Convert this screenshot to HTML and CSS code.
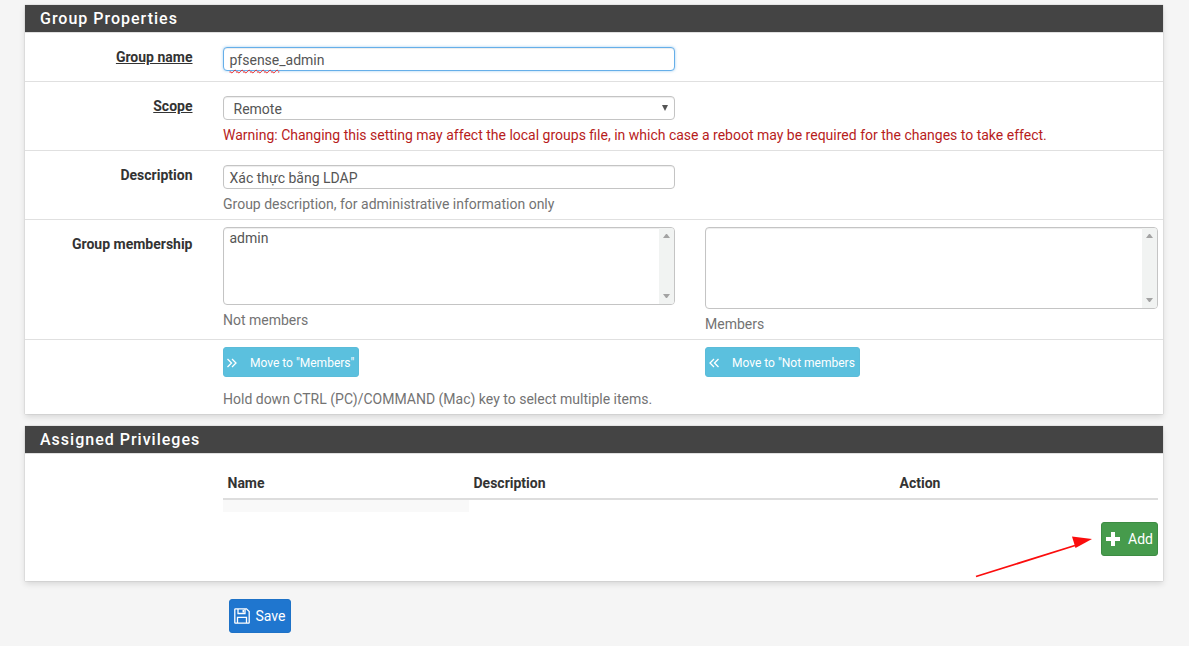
FILE: index.html
```html
<!DOCTYPE html>
<html lang="en">
<head>
<meta charset="utf-8">
<title>Group Properties</title>
<link rel="stylesheet" href="styles.css">
</head>
<body>
<main class="page">
  <section class="panel">
    <h2 class="panel-title">Group Properties</h2>
    <div class="row row-first">
      <div class="label"><span class="req">Group name</span></div>
      <div class="content">
        <div class="field field-focus"><span class="misspelt">pfsense</span>_admin</div>
      </div>
    </div>
    <div class="row">
      <div class="label"><span class="req">Scope</span></div>
      <div class="content">
        <div class="field select-field">Remote<span class="caret"></span></div>
        <p class="warning">Warning: Changing this setting may affect the local groups file, in which case a reboot may be required for the changes to take effect.</p>
      </div>
    </div>
    <div class="row">
      <div class="label">Description</div>
      <div class="content">
        <div class="field">Xác thực bằng LDAP</div>
        <p class="help">Group description, for administrative information only</p>
      </div>
    </div>
    <div class="row row-tight">
      <div class="label">Group membership</div>
      <div class="pair">
        <div>
          <div class="listbox">
            <div class="list-items">admin</div>
            <div class="scrollbar"><span class="arrow-up"></span><span class="arrow-down"></span></div>
          </div>
          <p class="help help-list">Not members</p>
        </div>
        <div>
          <div class="listbox listbox-tall">
            <div class="list-items"></div>
            <div class="scrollbar"><span class="arrow-up"></span><span class="arrow-down"></span></div>
          </div>
          <p class="help help-list">Members</p>
        </div>
      </div>
    </div>
    <div class="row row-tight row-last">
      <div class="label"></div>
      <div class="content-buttons">
        <div class="pair">
          <div>
            <button class="btn btn-info" type="button">
              <svg class="icon-move" viewBox="0 0 12 12"><path d="M1.5 2 5.5 6 1.5 10M6 2l4 4-4 4" fill="none" stroke="currentColor" stroke-width="1.3"/></svg>
              <span class="btn-text">Move to "Members"</span>
            </button>
          </div>
          <div>
            <button class="btn btn-info" type="button">
              <svg class="icon-move" viewBox="0 0 12 12"><path d="M6 2 2 6l4 4M10.500 2l-4 4 4 4" fill="none" stroke="currentColor" stroke-width="1.3"/></svg>
              <span class="btn-text">Move to "Not members</span>
            </button>
          </div>
        </div>
        <p class="help help-hold">Hold down CTRL (PC)/COMMAND (Mac) key to select multiple items.</p>
      </div>
    </div>
  </section>

  <section class="panel panel-second">
    <h2 class="panel-title">Assigned Privileges</h2>
    <div class="priv-body">
      <div class="table">
        <div class="thead">
          <div class="th th-name">Name</div>
          <div class="th th-desc">Description</div>
          <div class="th">Action</div>
        </div>
        <div class="stripe"></div>
      </div>
      <div class="add-line">
        <button class="btn btn-add" type="button">
          <svg class="icon-plus" viewBox="0 0 14 14"><path d="M5 0h4v5h5v4H9v5H5V9H0V5h5z" fill="currentColor"/></svg>
          <span>Add</span>
        </button>
      </div>
    </div>
  </section>

  <div class="save-line">
    <button class="btn btn-save" type="button">
      <svg class="icon-save" viewBox="0 0 16 16"><path d="M1.500.8h11l2.700 2.700v11a.7.7 0 0 1-.7.7h-13a.7.7 0 0 1-.7-.7v-13a.7.7 0 0 1 .7-.7z" fill="none" stroke="currentColor" stroke-width="1.300"/><path d="M4 1v4.500h7V1M3.500 15V9.300h9V15" fill="none" stroke="currentColor" stroke-width="1.300"/><path d="M8.500 1.800h1.500v2.700H8.500z" fill="currentColor"/></svg>
      <span>Save</span>
    </button>
  </div>
</main>
<svg class="annotation" viewBox="0 0 120 42" aria-hidden="true"><path d="M1 40.500 100 9.500" stroke="#fb0d0d" stroke-width="1.800" fill="none"/><path d="M117 3 97 0.500l3.500 11.500z" fill="#fb0d0d"/></svg>
</body>
</html>
```

FILE: styles.css
```css
* { box-sizing: border-box; }

html, body { margin: 0; padding: 0; }

body {
  background: #f5f5f5;
  color: #333;
  font: 14px/20px Roboto, "Liberation Sans", sans-serif;
  height: 646px;
  overflow: hidden;
  position: relative;
}

.page { padding: 5px 26px 0 25px; }

.panel {
  background: #fff;
  box-shadow: 0 3px 6px rgba(0, 0, 0, .12), 0 0 1px rgba(0, 0, 0, .3);
}

.panel-second { margin-top: 12px; }

.panel-title {
  background: #444;
  border-bottom: 1px solid #e0e0e0;
  color: #fff;
  font-size: 16px;
  font-weight: 500;
  height: 28px;
  letter-spacing: 1px;
  line-height: 27px;
  margin: 0;
  padding-left: 15px;
}

.row {
  border-bottom: 1px solid #e0e0e0;
  display: grid;
  grid-template-columns: 167.500px 1fr;
  column-gap: 30.500px;
  padding: 14px 5px 5px 0;
}

.row-first { padding-top: 14px; padding-bottom: 10px; }
.row-tight { padding-top: 7px; }
.row-last { border-bottom: 0; padding-bottom: 5px; }

.label {
  font-weight: 700;
  text-align: right;
}

.row-tight .label { padding-top: 7px; }

.req { text-decoration: underline; }

.content { width: 452px; }
.content .warning { width: 900px; }

.field {
  background: #fff;
  border: 1px solid #c4c4c4;
  border-radius: 4px;
  color: #555;
  height: 24px;
  line-height: 24px;
  padding-left: 5.500px;
  box-shadow: inset 0 1px 1px rgba(0, 0, 0, .075);
  position: relative;
}

.field-focus {
  border-color: #66afe9;
  box-shadow: inset 0 1px 1px rgba(0, 0, 0, .075), 0 0 3px rgba(102, 175, 233, .6);
}

.misspelt {
  text-decoration: underline wavy #f02020;
  text-decoration-thickness: 1px;
  text-underline-offset: 4px;
}

.select-field { padding-left: 9.500px; }

.caret {
  border-left: 3px solid transparent;
  border-right: 3px solid transparent;
  border-top: 6px solid #555;
  position: absolute;
  right: 6px;
  top: 8px;
}

.warning {
  color: #b71c1c;
  margin: 5px 0 0;
}

.help {
  color: #737373;
  margin: 5px 0 0;
}

.pair {
  display: grid;
  grid-template-columns: 452px 453px;
  column-gap: 30px;
}

.listbox {
  border: 1px solid #c4c4c4;
  border-radius: 4px;
  color: #555;
  display: flex;
  height: 78px;
  overflow: hidden;
  box-shadow: inset 0 1px 1px rgba(0, 0, 0, .075);
}

.listbox-tall { height: 82px; }

.list-items {
  flex: 1;
  padding: 0 5.500px;
}

.scrollbar {
  background: #f1f3f2;
  display: flex;
  flex-direction: column;
  justify-content: space-between;
  padding: 6px 4px;
  width: 15px;
}

.arrow-up, .arrow-down {
  border-left: 3.500px solid transparent;
  border-right: 3.500px solid transparent;
  height: 0;
  width: 7px;
}

.arrow-up { border-bottom: 4px solid #a3a3a3; }
.arrow-down { border-top: 4px solid #a3a3a3; }

.help-hold { margin-top: 12px; }

.btn {
  align-items: center;
  border: 1px solid transparent;
  border-radius: 3px;
  color: #fff;
  display: inline-flex;
  font-family: inherit;
  padding: 0;
}

.btn-info {
  background: #5bc0de;
  border-color: #5bbcd9;
  font-size: 12px;
  height: 30px;
  padding: 0 4px 0 2px;
}

.btn-text { padding-top: 2px; }

.icon-move { height: 12px; margin-right: 12px; margin-top: 1px; width: 12px; }

.priv-body { height: 127px; padding: 19px 5px 0 198px; }

.thead {
  border-bottom: 2px solid #ddd;
  display: flex;
  font-weight: 700;
  height: 27px;
  line-height: 20px;
}

.th { padding-left: 4.500px; }
.th-name { width: 246px; }
.th-desc { width: 426px; }

.stripe {
  background: #f9f9f9;
  height: 12px;
  width: 246px;
}

.add-line {
  display: flex;
  justify-content: flex-end;
  margin-top: 10px;
}

.btn-add {
  background: #469b4c;
  border-color: #3d8c43;
  font-size: 14px;
  height: 34px;
  padding: 0 4px 0 4px;
  width: 57px;
}

.icon-plus { height: 14px; margin-right: 8px; width: 14px; }

.save-line { margin-top: 18px; padding-left: 204px; }

.btn-save {
  background: #1f76cf;
  border-color: #1e72c7;
  font-size: 14px;
  height: 34px;
  padding: 0 4px;
  width: 62px;
}

.icon-save { height: 16px; margin-right: 5.500px; width: 16px; }

.annotation {
  height: 42px;
  left: 975px;
  position: absolute;
  top: 536px;
  width: 120px;
}
```
